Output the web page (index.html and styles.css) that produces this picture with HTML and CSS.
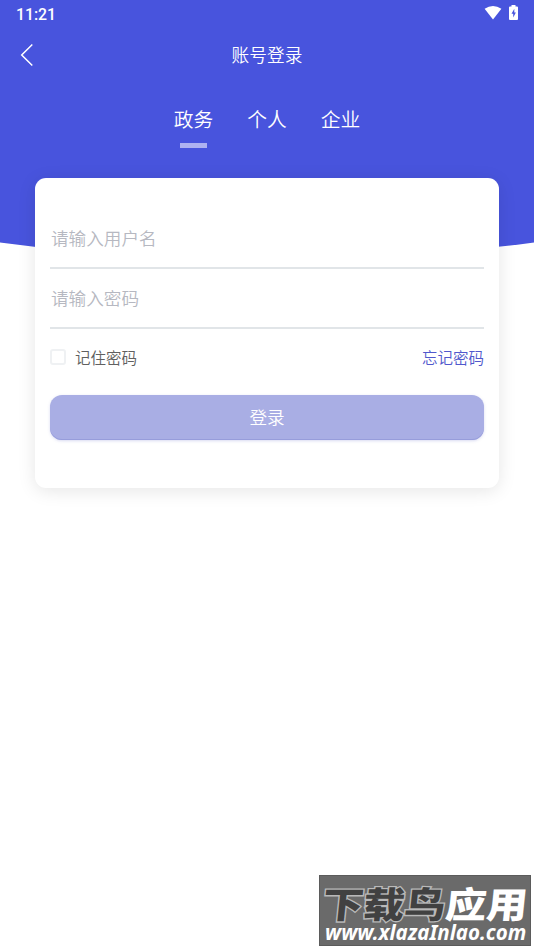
FILE: index.html
```html
<!DOCTYPE html>
<html lang="zh-CN">
<head>
<meta charset="utf-8">
<title>账号登录</title>
<link rel="stylesheet" href="styles.css">
</head>
<body>
<div class="screen">
  <header class="hero">
    <div class="status">
      <span class="time">11:21</span>
      <span class="status-icons">
        <svg width="18" height="15" viewBox="0 0 18 15"><path d="M0.600 3.800Q9-1.800 17.400 3.800L9 14.600Z" fill="#fff"/></svg>
        <svg class="battery" width="9" height="15" viewBox="0 0 9 15"><path d="M2.500 0h4v1.500H8q1 0 1 1V14q0 1-1 1H1q-1 0-1-1V2.500q0-1 1-1h1.500Z" fill="#fff"/><path d="M5.300 3.800 2.500 8.700h1.700v3.700l2.700-5H5.300Z" fill="#4854dd"/></svg>
      </span>
    </div>
    <div class="titlebar">
      <svg class="back" width="14" height="24" viewBox="0 0 14 24"><path d="M12.300 1.500 1.700 12l10.600 10.500" fill="none" stroke="#fff" stroke-width="1.500"/></svg>
      <h1>账号登录</h1>
    </div>
    <nav class="tabs">
      <a class="tab active">政务</a>
      <a class="tab">个人</a>
      <a class="tab">企业</a>
    </nav>
  </header>
  <main class="card">
    <input class="field" type="text" placeholder="请输入用户名">
    <input class="field" type="password" placeholder="请输入密码">
    <div class="options">
      <label class="remember"><span class="box"></span>记住密码</label>
      <a class="forgot">忘记密码</a>
    </div>
    <button class="submit">登录</button>
  </main>
  <aside class="watermark">
    <div class="brand"><span class="dark">下载鸟</span><span class="light">应用</span></div>
    <div class="site">www.xlazaInlao.com</div>
  </aside>
</div>
</body>
</html>
```
FILE: styles.css
```css
* { box-sizing: border-box; }

body {
  margin: 0;
  background: #fff;
  font-family: Roboto, "Noto Sans CJK SC", sans-serif;
  font-weight: 350;
}

.screen {
  position: relative;
  height: 950px;
  overflow: hidden;
}

.hero {
  height: 260px;
  background: #4854dd;
  color: #fff;
  clip-path: path("M0 0H534V242.500Q267 278 0 242.500Z");
}

.status {
  display: flex;
  justify-content: space-between;
  height: 28px;
  padding: 5px 16px 0 16px;
}

.time {
  font-size: 15.800px;
  font-weight: 500;
  line-height: 19px;
}

.status-icons {
  display: flex;
  gap: 7px;
}

.titlebar {
  display: grid;
  grid-template-columns: 40px 1fr 40px;
  align-items: center;
  height: 54px;
}

.back { margin-left: 20px; }

h1 {
  margin: 2px 0 0;
  font-size: 17.700px;
  font-weight: 350;
  line-height: 26px;
  text-align: center;
}

.tabs {
  display: flex;
  justify-content: center;
  gap: 34px;
  padding-top: 24px;
}

.tab {
  display: flex;
  flex-direction: column;
  align-items: center;
  font-size: 19.800px;
  line-height: 30px;
}

.active::after {
  content: "";
  width: 27px;
  height: 5px;
  margin-top: 7px;
  background: #aeb2f1;
}

.card {
  position: relative;
  height: 310px;
  margin: -82px 35px 0;
  padding: 31px 15px 0;
  border-radius: 11px;
  background: #fff;
  box-shadow: 0 3px 18px rgba(0, 0, 0, 0.1);
}

.field {
  display: block;
  width: 434px;
  height: 60px;
  padding: 2px 0 0 1px;
  border: 0;
  border-bottom: 2px solid #e1e5e8;
  outline: 0;
  background: transparent;
  font: 350 17.600px/30px Roboto, "Noto Sans CJK SC", sans-serif;
}

.field::placeholder { color: #b6b8c1; }

.options {
  display: flex;
  align-items: center;
  justify-content: space-between;
  height: 56px;
  font-size: 15.500px;
}

.remember {
  display: flex;
  align-items: center;
  color: #606060;
}

.box {
  width: 16px;
  height: 16px;
  margin-right: 9px;
  border: 2px solid #eff1f3;
  border-radius: 3px;
}

.forgot { color: #5058cc; }

.submit {
  display: block;
  width: 434px;
  height: 45px;
  margin-top: 10px;
  padding: 2px 0 0;
  border: 0;
  border-radius: 12px;
  background: #a9aee4;
  box-shadow: inset 0 -1px #979ddb, 0 1px 3px rgba(100, 108, 200, 0.25);
  color: #fff;
  font: 350 17.600px/43px Roboto, "Noto Sans CJK SC", sans-serif;
}

.watermark {
  position: absolute;
  left: 319px;
  top: 875px;
  width: 212px;
  height: 71px;
  border: 1px solid #5b5b5b;
  background: #6a6a6a;
  color: #fff;
  white-space: nowrap;
}

.brand {
  height: 45px;
  padding-left: 3px;
  font: 900 41px/52px "Noto Sans CJK SC", sans-serif;
}

.brand span {
  display: inline-block;
  transform: skewX(-6deg) scaleY(0.88);
}

.dark {
  color: #414141;
  -webkit-text-stroke: 3px #b9b9b9;
  paint-order: stroke fill;
}

.site {
  padding-left: 5px;
  font: italic 700 20.500px/23px "Noto Sans", sans-serif;
}
```
